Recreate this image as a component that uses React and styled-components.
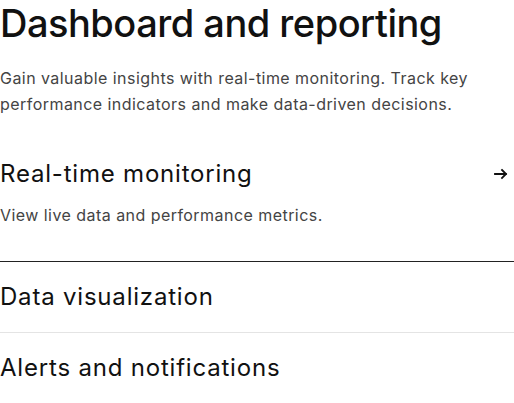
import React, { useState } from 'react'
import styled, { createGlobalStyle } from 'styled-components'

const GlobalStyle = createGlobalStyle`
  html, body {
    margin: 0;
    padding: 0;
    background: #ffffff;
  }
  body {
    font-family: 'Inter', 'Noto Sans', sans-serif;
    color: #111111;
  }
`

const Page = styled.div`
  width: 514px;
`

const Header = styled.header`
  display: flex;
  flex-direction: column;
  gap: 19px;
  padding-bottom: 22px;
`

const Title = styled.h1`
  margin: 0;
  font-size: 38px;
  font-weight: 500;
  line-height: 46px;
  letter-spacing: -0.5px;
  color: #111111;
`

const Lead = styled.p`
  margin: 0;
  font-size: 16px;
  line-height: 26px;
  letter-spacing: 0.45px;
  color: #444444;
`

const List = styled.div`
  display: flex;
  flex-direction: column;
`

const Item = styled.div`
  border-bottom: 1px solid ${props => (props.$open ? '#222222' : '#e4e4e4')};
`

const Trigger = styled.button`
  display: flex;
  align-items: center;
  justify-content: space-between;
  width: 100%;
  padding: 19px 0 ${props => (props.$open ? '13px' : '19px')};
  border: 0;
  background: none;
  font-family: inherit;
  font-size: 24px;
  line-height: 32px;
  font-weight: 400;
  letter-spacing: 0.8px;
  color: #111111;
  text-align: left;
  cursor: pointer;
`

const Arrow = styled.svg`
  width: 14px;
  height: 14px;
  margin-right: 6px;
  flex-shrink: 0;
`

const Body = styled.p`
  margin: 0;
  padding-bottom: 34px;
  font-size: 16px;
  line-height: 24px;
  letter-spacing: 0.45px;
  color: #444444;
`

const items = [
  { title: 'Real-time monitoring', text: 'View live data and performance metrics.' },
  { title: 'Data visualization', text: 'Turn complex data into clear charts and graphs.' },
  { title: 'Alerts and notifications', text: 'Get notified when key metrics change.' },
]

export default function App() {
  const [open, setOpen] = useState(0)

  return (
    <Page>
      <GlobalStyle />
      <Header>
        <Title>Dashboard and reporting</Title>
        <Lead>
          Gain valuable insights with real-time monitoring. Track key performance indicators and make data-driven decisions.
        </Lead>
      </Header>
      <List>
        {items.map((item, i) => {
          const isOpen = open === i
          return (
            <Item key={item.title} $open={isOpen}>
              <Trigger $open={isOpen} onClick={() => setOpen(isOpen ? -1 : i)}>
                {item.title}
                {isOpen && (
                  <Arrow viewBox="0 0 14 14" fill="none" stroke="#111" strokeWidth="1.8" strokeLinecap="square">
                    <path d="M1 7h11M8 3l4 4-4 4" />
                  </Arrow>
                )}
              </Trigger>
              {isOpen && <Body>{item.text}</Body>}
            </Item>
          )
        })}
      </List>
    </Page>
  )
}
